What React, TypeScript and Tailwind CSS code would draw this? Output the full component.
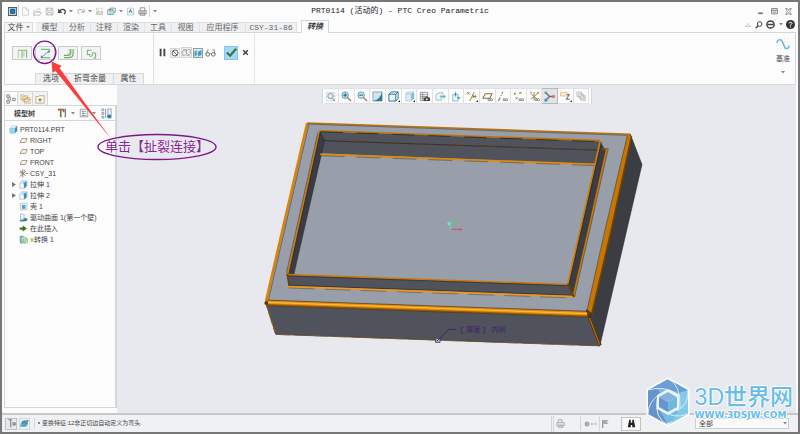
import type { ReactNode } from "react";

const MONO = "font-['Liberation_Mono','Noto_Sans_CJK_SC',monospace]";
const SANS = "font-['Liberation_Sans','Noto_Sans_CJK_SC',sans-serif]";

type IconProps = { size?: number; children: ReactNode };

// All small icons are drawn on a 12 x 12 grid
function Icon({ size = 12, children }: IconProps) {
  return (
    <svg width={size} height={size} viewBox="0 0 12 12" fill="none" className="block shrink-0" aria-hidden="true">
      {children}
    </svg>
  );
}

function Caret() {
  return (
    <svg width="4" height="3" viewBox="0 0 4 3" className="block shrink-0" aria-hidden="true">
      <path d="M0 0H4L2 2.5Z" fill="#888" />
    </svg>
  );
}

const glasses = <path d="M6.5 9.5a1.2 1.2 0 1 0 2.4 0a1.2 1.2 0 1 0-2.4 0M9.2 9.5a1.2 1.2 0 1 0 2.4 0a1.2 1.2 0 1 0-2.4 0" stroke="#555" strokeWidth=".7" />;

const quickAccess = [
  { label: "New", w: "w-[12px]", icon: <path d="M2 1H7L10 4V11H2ZM7 1V4H10" stroke="#c8c8c8" /> },
  { label: "Open", w: "w-[12px]", icon: <path d="M1 11V5H4L5 6H9V7M1 11L3 7H11L9 11ZM5 4Q7 1 10 3" stroke="#b9b9b9" /> },
  { label: "Save", w: "w-[13px]", icon: <path d="M1.500 1.500H10.500V10.500H1.500ZM3.500 1.500V5H8.500V1.500M3.500 10.500V7.500H8.500V10.500" stroke="#aaa" /> },
  { label: "Undo", w: "w-[12px]", icon: <path d="M1 3V7H5M1.500 6.500Q4 2 8 3.500Q11.500 6 8 9.500" stroke="#3d4043" strokeWidth="1.700" /> },
  { label: "Undo list", w: "w-[6px]", caret: true },
  { label: "Redo", w: "w-[13px]", icon: <path d="M11 3V7H7M10.500 6.500Q8 2 4 3.500Q.5 6 4 9.500" stroke="#aaa" strokeWidth="1.300" /> },
  { label: "Redo list", w: "w-[6px]", caret: true },
  { label: "Regenerate", w: "w-[12px]", icon: <path d="M2 1V4H5M4 2H6M8 1L10 3M8 3L10 1M2 6H9V10H2ZM4 6V10M2 8H9M10 5V11" stroke="#b4b4b4" strokeWidth=".9" /> },
  { label: "Windows", w: "w-[12px]", icon: <><path d="M1 3.500H8V10H1ZM4 1.500H11V7H4Z" stroke="#777" /><path d="M4 5H9V10H4Z" fill="#bde5f5" stroke="#5a9ab6" strokeWidth=".7" /></> },
  { label: "Windows list", w: "w-[7px]", caret: true },
  { label: "Close window", w: "w-[12px]", icon: <><path d="M2 1.500H10V10.500H2Z" fill="#f3f8fb" stroke="#96a6ad" strokeWidth=".7" /><path d="M4 8L6 3L8 8M5 6H7" stroke="#486e8b" /></> },
  { label: "Print", w: "w-[13px]", icon: <><path d="M3 5V1H9V5M1 5H11V9H1ZM3 8H9V11H3Z" stroke="#777" /><path d="M2 6H10V7H2Z" fill="#888" /></> },
];

const tabs = [
  { name: "模型", w: "w-[28px]" },
  { name: "分析", w: "w-[27px]" },
  { name: "注释", w: "w-[27px]" },
  { name: "渲染", w: "w-[27px]" },
  { name: "工具", w: "w-[27px]" },
  { name: "视图", w: "w-[28px]" },
  { name: "应用程序", w: "w-[46px]" },
  { name: "CSY-31-86", w: "w-[51px]" },
];

const convertTools = [
  { label: "边扯裂", icon: <><path d="M1 2.500H5.500V11M11 2.500H6.500M10.500 2.500V11" stroke="#79b56b" strokeWidth="1.100" /><path d="M1.500 2V11M7.500 4V9" stroke="#a4cf98" /></> },
  { label: "扯裂连接", icon: <><path d="M1 1.500H10.500V4M1.500 8V10.500H11" stroke="#84bc75" strokeWidth="1.100" /><path d="M3 9L9 4" stroke="#5f87a6" /><path d="M1 9H3V11H1ZM8.500 3H10.500V5H8.500Z" fill="#3f78a8" /></> },
  { label: "边折弯", icon: <><path d="M11 1V6Q11 10.500 6 10.500H1M8.500 1V5.500Q8.500 8 5 8H1" stroke="#78a86a" strokeWidth="1.300" /><path d="M7 1V5Q7 6.500 5 6.500" stroke="#bbb" /></> },
  { label: "拐角止裂槽", icon: <path d="M1 2.500H6M1.500 2V7H4V8.500Q6 10 7 7.500V5.500H10.500V11H8" stroke="#79b56b" strokeWidth="1.100" /> },
];

const viewTools = [
  { label: "Refit", icon: <><path d="M1.500 1.500H10.500V10.500H1.500Z" stroke="#b9c8cf" strokeDasharray="2 1" /><circle cx="6" cy="5.500" r="3" fill="#d5eef8" stroke="#7897a6" /><path d="M8 8L11 11" stroke="#a89473" strokeWidth="1.300" /></> },
  { label: "Zoom in", icon: <><circle cx="4.500" cy="4.500" r="3.500" fill="#cdebf7" stroke="#5c8ba1" /><path d="M2.500 4.500H6.500M4.500 2.500V6.500" stroke="#166c9e" strokeWidth="1.200" /><path d="M7 7L11 11" stroke="#93826b" strokeWidth="1.500" /></> },
  { label: "Zoom out", icon: <><circle cx="4.500" cy="4.500" r="3.500" fill="#cdebf7" stroke="#5c8ba1" /><path d="M2.500 4.500H6.500" stroke="#166c9e" strokeWidth="1.200" /><path d="M7 7L11 11" stroke="#93826b" strokeWidth="1.500" /></> },
  { label: "Repaint", icon: <><path d="M1 1H11V11H1Z" fill="#cfe6ee" stroke="#70828b" strokeWidth=".7" /><path d="M11 1V11H1Q9 9 11 1Z" fill="#2f7f9f" /></> },
  { label: "Display style", more: true, icon: <path d="M1 3.500H8.500V11H1ZM1 3.500L3.500 1H11L8.500 3.500M11 1V8.500L8.500 11" fill="#e7f7fc" stroke="#24698a" /> },
  { label: "Saved orientations", more: true, icon: <><path d="M2 3H8V11H2Z" fill="#dcecf2" stroke="#b1c1c8" strokeWidth=".7" /><path d="M2 3L4 1H11L8 3Z" fill="#edf6f9" stroke="#a6b7be" strokeWidth=".7" /><path d="M11 1V8L8 11V3Z" fill="#75c2df" /></> },
  { label: "View manager", icon: <><path d="M1.500 1.500H9.500V10.500H1.500ZM1.500 4H9.500M1.500 6H9.500M1.500 8H9.500M4 1.500V10.500" stroke="#888" strokeWidth=".9" /><path d="M5 7H7L8 6H9L10 7H12V11H5Z" fill="#444" /><circle cx="8.500" cy="9" r="1.100" fill="#ddd" /></> },
  { label: "Section", icon: <><path d="M1 4L4 2H9L7 4V10H1Z" fill="#edf5f7" stroke="#99aeb7" strokeWidth=".8" /><path d="M5 5H9V3L12 6L9 9V7H5Z" fill="#58b4d6" stroke="#fff" strokeWidth=".4" /></> },
  { label: "Perspective", icon: <><path d="M3 4H9V11H3Z" fill="#e4f4f9" stroke="#8daab5" strokeWidth=".8" /><path d="M4.500 4L6 .5L7.500 4H6.500V6H5.500V4ZM8 6L12 7.500L8 9Z" fill="#379bc4" /></> },
  { label: "Datum display", more: true, icon: <path d="M1 1L4 4M1 4L4 1M4 11L9 1M7 4L11 8M7 8L11 4M7 6H11.500" stroke="#8b713e" strokeWidth=".9" /> },
  { label: "Plane display", icon: <><path d="M3.500 3H11L8.500 8H1Z" stroke="#8b713e" strokeWidth="1.100" />{glasses}</> },
  { label: "Axis display", icon: <><path d="M1.500 11L3.500 7M4.200 5.500L4.700 4.500M5.300 3L6.300 1" stroke="#8b713e" strokeWidth="1.200" />{glasses}</> },
  { label: "Point display", icon: <><path d="M1 2L3 4M1 4L3 2M7 1L9 3M7 3L9 1M3 7L5 9M3 9L5 7" stroke="#8b713e" />{glasses}</> },
  { label: "Csys display", icon: <><path d="M5.500 1V10M2 3L9 9M2 9L9 3M1 1L3 2M9 1L11 3M9 3L11 1" stroke="#9a7d43" />{glasses}</> },
  { label: "Spin center", pressed: true, icon: <><path d="M2 2L6 6L2 10M6 6H11" stroke="#627079" strokeWidth="1.500" /><circle cx="2" cy="2" r="1.500" fill="#65a269" /><circle cx="2" cy="10" r="1.700" fill="#3f9dc4" /><circle cx="10.300" cy="6" r="1.700" fill="#e06b67" /></> },
  { label: "Annotation display", more: true, icon: <><path d="M.5 1.500H7.500V5.500H.5Z" fill="#fbefc9" stroke="#cdbb87" strokeWidth=".8" /><path d="M7.500 4H10L7 9H11" stroke="#777" strokeWidth="1.200" /></> },
  { label: "Layers", icon: <path d="M1 1H6V6H1ZM3 3H8V8H3ZM5 5H10V10H5ZM7 9L11 11M8 7H11" fill="#f1f1f1" stroke="#bbb" strokeWidth=".9" /> },
];

const planeIcon = <path d="M4 3.500H11L8.500 8.500H1.500Z" stroke="#8f825f" strokeWidth="1.100" />;
const extrudeIcon = <><path d="M1 4L4 1H11V8L8 11H1Z" fill="#c9dfe8" stroke="#90aab6" strokeWidth=".6" /><path d="M6 4L10 2V8L7 11Z" fill="#348fbd" /><path d="M2 5H6V10H2Z" fill="#fff" /></>;

const treeItems = [
  { name: "RIGHT", icon: planeIcon },
  { name: "TOP", icon: planeIcon },
  { name: "FRONT", icon: planeIcon },
  { name: "CSY_31", icon: <path d="M5 1V11M1 2L9 9M1 10L9 3M9 6H12M1 5H4M7 1V3" stroke="#746241" strokeWidth="1.100" /> },
  { name: "拉伸 1", icon: extrudeIcon, expandable: true },
  { name: "拉伸 2", icon: extrudeIcon, expandable: true },
  { name: "壳 1", icon: <><path d="M1.500 1.500H10.500V10.500H1.500Z" fill="#e3eef3" stroke="#a5b6be" strokeWidth=".8" /><path d="M4 4H8.500V9H4Z" fill="#579fc0" /></> },
  { name: "驱动曲面 1(第一个壁)", icon: <><path d="M2 1L7 2V7L2 9Z" fill="#eef1f3" stroke="#9ca8ae" strokeWidth=".8" /><path d="M1 9Q5 11 7 7L11 7V10Q7 12 1 11Z" fill="#317d9d" /></> },
  { name: "在此插入", icon: <path d="M1 4.500H5V2L10.500 6L5 10V7.500H1Z" fill="#37701d" /> },
  { name: "转换 1", icon: <><path d="M1 1H6V11H1Z" fill="#7babb9" /><path d="M3 3H9V11H7V6H5V11H3Z" fill="#d4e8d2" stroke="#6aab69" strokeWidth=".8" /><path d="M9 5H11V11" stroke="#579d61" /></>, mark: true },
];

function TitleBar() {
  return (
    <header className="relative flex h-[18px] shrink-0 items-center justify-between pl-[4px] pr-[3px]">
      <div className="flex items-center">
        <button aria-label="Creo" className="flex w-[12px] justify-center">
          <Icon size={9}>
            <path d="M.5 .5H11.500V11.500H.5Z" fill="#bad7e7" stroke="#55585c" strokeWidth="1.400" />
            <path d="M3.500 3H9V8.500H3.500Z" fill="#1679bd" stroke="#174665" />
          </Icon>
        </button>
        <div className="flex h-[12px] items-center border-x border-[#d5d5d5]">
          {quickAccess.map((q) => (
            <button key={q.label} aria-label={q.label} className={`flex justify-center ${q.w}`}>
              {q.caret ? <Caret /> : <Icon size={9}>{q.icon}</Icon>}
            </button>
          ))}
        </div>
        <button aria-label="Customize toolbar" className="ml-[3px]">
          <Caret />
        </button>
      </div>
      <h1 className="absolute left-1/2 -translate-x-1/2 whitespace-nowrap text-[8px] leading-[10px] text-[#222]">
        PRT0114 (活动的) - PTC Creo Parametric
      </h1>
      <div className="flex">
        <button aria-label="Minimize" className="flex w-[14px] justify-center">
          <Icon size={7}><path d="M2 9H10" stroke="#777" strokeWidth="3" /></Icon>
        </button>
        <button aria-label="Restore" className="flex w-[14px] justify-center">
          <Icon size={7}><path d="M1 1H11V10H1ZM1 4H11M3 7H9" stroke="#777" strokeWidth="1.500" /></Icon>
        </button>
        <button aria-label="Close" className="flex w-[14px] justify-center">
          <Icon size={7}><path d="M1 1H4L6 4L8 1H11L8 6L11 11H8L6 8L4 11H1L4 6Z" stroke="#777" strokeWidth="1.300" /></Icon>
        </button>
      </div>
    </header>
  );
}

function TabBar() {
  return (
    <nav className="flex h-[13px] shrink-0 items-end border-b border-[#d4d7d9] text-[8px] leading-[10px] text-[#666]">
      <button className="flex h-[10px] w-[29px] items-center justify-center gap-[2px] border border-b-0 border-[#d9dcdf] bg-[#f5f5f6] text-[#444]">
        文件 <Caret />
      </button>
      <div className="ml-[3px] flex h-[10px] border-t border-[#dfe1e4] bg-[#eff0f2]">
        {tabs.map((t) => (
          <button key={t.name} className={`whitespace-nowrap border-r border-[#dfe1e4] text-center leading-[9px] ${t.w}`}>
            {t.name}
          </button>
        ))}
      </div>
      <button className="-mb-px ml-[4px] h-[13px] w-[28px] border border-b-0 border-[#d4d7d9] bg-[#fcfcfc] font-bold italic text-[#444]">
        转换
      </button>
      <div className="ml-auto flex items-center self-start pr-[1px]">
        <button aria-label="Minimize ribbon" className="flex w-[11px] justify-center">
          <Icon size={6}><path d="M1 9L6 3L11 9Z" stroke="#bbb" strokeWidth="1.500" /></Icon>
        </button>
        <button aria-label="Search" className="flex w-[11px] justify-center">
          <Icon size={8}><circle cx="7" cy="4.500" r="3.500" stroke="#444" strokeWidth="1.500" /><path d="M4.500 7.500L1 11" stroke="#444" strokeWidth="2" /></Icon>
        </button>
        <button aria-label="Learning connector" className="flex w-[12px] justify-center">
          <Icon size={9}><circle cx="6" cy="6" r="4.800" stroke="#3d4145" strokeWidth="2" /><path d="M2 6H10" stroke="#3d4145" strokeWidth="2" /></Icon>
        </button>
        <button aria-label="More" className="flex w-[9px] justify-center"><Caret /></button>
        <button aria-label="Help" className="flex w-[10px] justify-center">
          <Icon size={9}><circle cx="6" cy="6" r="6" fill="#333" /><path d="M4 4.500Q4 3 6 3T8 4.500Q8 5.500 6 6.500V7.500M6 8.500V10" stroke="#fff" strokeWidth="1.300" /></Icon>
        </button>
      </div>
    </nav>
  );
}

function Ribbon() {
  return (
    <section className="flex h-[52px] shrink-0 border-x border-b border-[#d4d7d9] text-[8px] text-[#444]">
      <div className="flex w-[149px] flex-col justify-between border-r border-[#dee0e2]">
        <div className="flex gap-[3px] pl-[7px] pt-[13px]">
          {convertTools.map((t) => (
            <button key={t.label} aria-label={t.label} className="flex h-[14px] w-[20px] items-center justify-center border border-[#c8cacd] bg-[#f3f4f5]">
              <Icon size={11}>{t.icon}</Icon>
            </button>
          ))}
        </div>
        <div className="ml-[30px] flex h-[11px] w-[109px] border-x border-t border-[#d7dadd] bg-[#eff0f2] leading-[10px]">
          <button className="w-[31px] border-r border-[#d7dadd]">选项</button>
          <button className="w-[47px] border-r border-[#d7dadd]">折弯余量</button>
          <button className="flex-1">属性</button>
        </div>
      </div>
      <div className="flex h-[39px] items-center pl-[3px]">
        <button aria-label="Pause" className="flex w-[11px] justify-center">
          <Icon size={9}><path d="M3.500 1V11M8.500 1V11" stroke="#444" strokeWidth="2.500" /></Icon>
        </button>
        <button aria-label="No preview" className="ml-[2px] border border-[#d4d4d4] bg-[#f4f4f4]">
          <Icon size={8}><circle cx="6" cy="6" r="4.500" stroke="#666" strokeWidth="1.500" /><path d="M3 3L9 9" stroke="#666" strokeWidth="1.500" /></Icon>
        </button>
        <button aria-label="Detached preview" className="ml-[1px] border border-[#d4d4d4] bg-[#f1f1f1]">
          <Icon size={9}><path d="M1 4L4 2H6V8L3 10H1ZM6 4L8 2H11V8L9 10H6M2 1L10 11" stroke="#999" /></Icon>
        </button>
        <button aria-label="Attached preview" className="ml-[1px] border border-[#999] bg-[#e4edf2]">
          <Icon size={8}><path d="M1 4L4 2V9L1 11ZM6 4L11 2V9L6 11Z" fill="#2f9dce" stroke="#6cb5d3" /></Icon>
        </button>
        <button aria-label="Verify" className="ml-[2px]">
          <Icon size={11}><path d="M1 8L3 3H4M11 8L10 3H8M5 8Q6 6 7 8" stroke="#888" /><circle cx="3" cy="8" r="2" stroke="#666" /><circle cx="9" cy="8" r="2" stroke="#666" /></Icon>
        </button>
        <button aria-label="确定" className="ml-[8px] flex h-[14px] w-[14px] items-center justify-center border border-[#83c6ee] bg-[#a3d8fa]">
          <Icon size={11}><path d="M1 6L4.500 9.500L11 2" stroke="#397732" strokeWidth="2.400" /></Icon>
        </button>
        <button aria-label="取消" className="ml-[4px]">
          <Icon size={7}><path d="M2 2L10 10M10 2L2 10" stroke="#444" strokeWidth="2.600" /></Icon>
        </button>
        <span className="ml-[5px] h-[51px] self-start border-r border-[#e2e3e5]" />
      </div>
      <button className={`ml-auto mr-[5px] flex flex-col items-center pt-[4px] text-[7px] leading-[9px] ${SANS}`}>
        <Icon size={14}>
          <path d="M1 1H12M1 4H12M1 7H12M1 10H12" stroke="#bbb" strokeWidth=".6" strokeDasharray=".7 2.300" />
          <path d="M.5 5Q3 0 5.500 4C7 7 7 10 9 10Q10.500 10 11.500 7.500" stroke="#58b7dc" strokeWidth="1.200" />
        </Icon>
        <span className="mb-[8px] mt-[3px]">基准</span>
        <Caret />
      </button>
    </section>
  );
}

function ModelTree() {
  return (
    <aside className={`flex w-[113px] shrink-0 flex-col bg-[#fcfcfc] pb-[5px] pt-[6px] text-[7px] text-[#444] ${SANS}`}>
      <div className="flex h-[14px]">
        <button aria-label="Model tree" className="flex w-[14px] items-center justify-center border border-b-0 border-[#d4d7d9]">
          <Icon size={10}><path d="M1 1H4V4H1ZM1 8H4V11H1ZM8 5H11V8H8ZM2.500 4V8M5 3V9" stroke="#777" /></Icon>
        </button>
        <button aria-label="Folders" className="flex w-[15px] items-center justify-center border-r border-t border-[#d4d7d9] bg-[#f1f2f3]">
          <Icon size={11}><path d="M1 2H4L5 3H8V7H1ZM3 4H6L7 5H10V9H3ZM5 6H8L9 7H12V11H5Z" fill="#faf1d6" stroke="#c3a66c" strokeWidth=".8" /></Icon>
        </button>
        <button aria-label="Favorites" className="flex w-[15px] items-center justify-center border-r border-t border-[#d4d7d9] bg-[#f1f2f3]">
          <Icon size={10}><path d="M1 3H4L5 2H11V11H1Z" fill="#fbf3db" stroke="#b9a16c" strokeWidth=".9" /><path d="M6 4.500L7 6.500L9 7L7 7.500L6 9.500L5 7.500L3 7L5 6.500Z" fill="#407ca3" /></Icon>
        </button>
      </div>
      <div className="flex min-h-0 flex-1 flex-col border border-r-2 border-[#d4d7d9]">
        <div className="flex h-[15px] shrink-0 items-center border-b border-[#d4d7d9] pl-[9px]">
          <h2 className="w-[43px] font-bold leading-[9px]">模型树</h2>
          <button aria-label="Settings" className="mr-[4px]">
            <Icon size={10}><path d="M1 2H8V5M4.500 2V11" stroke="#8a6d49" strokeWidth="2" /><path d="M10 1V11" stroke="#777" strokeWidth="1.500" /></Icon>
          </button>
          <Caret />
          <button aria-label="Show" className="ml-[4px] mr-[3px]">
            <Icon size={10}><path d="M1.500 1.500H10.500V10.500H1.500ZM3 4H9M3 6.500H9M3 9H9M5 3V10" stroke="#8d979b" /></Icon>
          </button>
          <Caret />
          <button aria-label="Tree filters" className="ml-[5px]">
            <Icon size={11}><path d="M1 1H3V3H1ZM1 5H3V7H1ZM1 9H3V11H1ZM5 1V11M7.500 1H11V11H7.500Z" stroke="#829ba6" /><circle cx="9" cy="9" r="2" fill="#1e7da8" /></Icon>
          </button>
        </div>
        <ul className="pt-[3px] leading-[11px]">
          <li className="flex items-center gap-[2px] pl-[4px]">
            <Icon size={9}><path d="M1 4L4 1H11V8L8 11H1Z" fill="#3a8daf" /><path d="M1 4H8V11H1Z" fill="#92d4ee" /><path d="M1 4L4 1H11L8 4Z" fill="#d6f0fa" /></Icon>
            PRT0114.PRT
          </li>
          {treeItems.map((item) => (
            <li key={item.name} className="flex h-[11px] items-center whitespace-nowrap pl-[7px]">
              <span className="w-[7px]">
                {item.expandable && (
                  <svg width="4" height="5" viewBox="0 0 4 5" className="block" aria-hidden="true">
                    <path d="M0 0L4 2.500L0 5Z" fill="#777" />
                  </svg>
                )}
              </span>
              <Icon size={9}>{item.icon}</Icon>
              <span className="w-[2px]" />
              {item.mark && (
                <Icon size={4}><path d="M1 1L11 11M11 1L1 11M6 0V12" stroke="#afb51f" strokeWidth="2.500" /></Icon>
              )}
              {item.name}
            </li>
          ))}
        </ul>
      </div>
    </aside>
  );
}

function PartModel() {
  return (
    <svg viewBox="117 85 680 328" className="absolute inset-0 h-full w-full" role="img" aria-label="PRT0114">
      {/* outer faces */}
      <path d="M307.500 123L631 134L589 313L266 302Z" fill="#989eaa" />
      <path d="M266 303L589 315L600.500 346L276 334.500Z" fill="#50535b" stroke="#34363b" strokeWidth=".7" />
      <path d="M631 134L642.700 164.500L600.500 346L589 315Z" fill="#3b3d42" stroke="#242528" strokeWidth=".6" />
      <path d="M276 334.500L600.500 346" stroke="#7d5726" strokeWidth=".8" strokeDasharray="14 5" />
      {/* bent edges */}
      <path d="M307.500 123L266.300 301" stroke="#da8306" strokeWidth="2.600" />
      <path d="M309.300 124L268.500 301" stroke="#4f4738" strokeWidth=".6" />
      <path d="M307.500 122.700L631 134" stroke="#bd7207" strokeWidth="1.500" />
      <path d="M308 123.900L629 135.200" stroke="#4b4740" strokeWidth=".6" />
      <path d="M628 135L632.500 135.500L612 230L592.800 314L587.500 311.500L606 230Z" fill="#c77505" />
      <path d="M632.300 136L612 230L592.500 314" fill="none" stroke="#714204" strokeWidth="1.600" />
      <path d="M628 136L605.700 230L587.500 311.500" fill="none" stroke="#433c2e" strokeWidth=".6" />
      <path d="M267.500 302.900L588.500 314.300" stroke="#9b5a00" strokeWidth="5.500" />
      <path d="M267.500 302.300L588.500 313.700" stroke="#e18c0b" strokeWidth="3.800" />
      <path d="M268 302.500L588 313.700" stroke="#ffb93e" strokeWidth="1.100" />
      <path d="M268 300.200L588 311.300M267 306L589 317.200" stroke="#49391e" strokeWidth=".6" />
      <path d="M589 315L601 345.500" stroke="#583507" strokeWidth="3" />
      <path d="M589 315L600.500 345" stroke="#b66c0b" strokeWidth="1.200" />
      <path d="M266.500 304L276 334" stroke="#8c5817" strokeWidth="1.500" strokeDasharray="6 2" />
      <circle cx="266.500" cy="303" r="1.900" fill="#513817" />
      <path d="M587 310L592 313L590 318Z" fill="#68400a" stroke="#26221c" strokeWidth=".6" />
      {/* pocket */}
      <path d="M320 131L601 141L596 164L321.500 153Z" fill="#50535b" />
      <path d="M324 140.500L599 150" stroke="#2b251d" strokeWidth=".8" />
      <path d="M350 141.400L590 149.600" stroke="#654110" strokeWidth=".6" strokeDasharray="20 12" />
      <path d="M320 131L325 140L294 275L288 275Z" fill="#3a3c41" stroke="#282a2d" strokeWidth=".5" />
      <path d="M320.500 154.300L596 164.300" stroke="#e08b0a" strokeWidth="1.800" />
      <path d="M321 155.600L596 165.500" stroke="#51493b" strokeWidth=".6" strokeDasharray="24 12" />
      <path d="M320 130.500L601 140.500" stroke="#be7107" strokeWidth="1.600" />
      <path d="M321 131.600L601 141.600" stroke="#282724" strokeWidth=".8" strokeDasharray="22 14" />
      <path d="M319.500 131L287.700 275" stroke="#cf7b06" strokeWidth="1.600" />
      <path d="M318 133L286.700 273M321 132L289.500 274" stroke="#302b23" strokeWidth=".5" />
      <path d="M601 141L605 148L608 148.500L574 297L568.500 284.500Z" fill="#3b3d42" />
      <path d="M601 141L568.500 284.500" stroke="#d17d07" strokeWidth="1.800" />
      <path d="M602.200 142L569.800 284" stroke="#2b2820" strokeWidth=".6" />
      <path d="M607.800 148L589.500 230L574 297" fill="none" stroke="#cb7706" strokeWidth="2" />
      <path d="M609 148.500L575.200 297" stroke="#49412f" strokeWidth=".6" />
      <path d="M603 149L609 148" stroke="#9b6212" />
      <path d="M288 275L568.500 284.500L574 296L289 286Z" fill="#50535b" />
      <path d="M287.500 274.600L568.500 284.500" stroke="#ca7807" strokeWidth="1.500" />
      <path d="M289 276L568 285.800M289 285.200L573 295.200" stroke="#302b24" strokeWidth=".6" />
      <path d="M288 286.600L574 296.800" stroke="#ec9a1c" strokeWidth="1.800" />
      <path d="M289 288L574 298" stroke="#56432a" strokeWidth=".5" strokeDasharray="26 10" />
      <path d="M287.500 274L289.500 286M568.500 284L574.500 297" stroke="#68400b" strokeWidth="1.800" />
      {/* spin center */}
      <path d="M452 229L453.500 222" stroke="#58d45c" />
      <path d="M451.500 229L449 223.500" stroke="#47dce1" />
      <path d="M452 229.300H462" stroke="#c4565d" />
      <circle cx="449.500" cy="223.500" r="1.600" fill="#5de8ec" />
      <path d="M452.500 221H455L453.500 224Z" fill="#4fdc55" />
      <path d="M460 228L463 229.500L460 231Z" fill="#e34a4f" />
      {/* thickness note */}
      <path d="M438 340.500L449.500 329.500H456.500" fill="none" stroke="#422169" strokeWidth=".9" />
      <path d="M436 338.500H440.500V342.500H436Z" fill="#c7c2cc" stroke="#443a4e" strokeWidth=".8" />
      <path d="M437 341.500L442 337" stroke="#422169" />
      <text x="460" y="332" fontSize="8" fill="#421d70" className={MONO}>[</text>
      <text x="467" y="332" fontSize="7" fill="#421d70" className={MONO}>厚度</text>
      <text x="482" y="332" fontSize="8" fill="#421d70" className={MONO}>]</text>
      <text x="492" y="332" fontSize="7" fill="#421d70" className={MONO}>内侧</text>
    </svg>
  );
}

function Viewport() {
  return (
    <main className="relative flex-1 bg-[#e7e9ee] pt-[3px]">
      <PartModel />
      <div className="relative mx-auto flex h-[16px] w-[270px] border-x border-[#d5d8dc] bg-[#fcfcfc] px-[1px]">
        {viewTools.map((t) => (
          <button
            key={t.label}
            aria-label={t.label}
            className={`relative flex flex-1 items-center justify-center border-r border-y ${
              t.pressed ? "border-[#b5b8bb] bg-[#e3e4e6]" : "border-[#dfe1e4]"
            }`}
          >
            <Icon size={11}>{t.icon}</Icon>
            {t.more && (
              <svg width="2" height="2" viewBox="0 0 2 2" className="absolute bottom-px right-px" aria-hidden="true">
                <path d="M2 0V2H0Z" fill="#222" />
              </svg>
            )}
          </button>
        ))}
      </div>
    </main>
  );
}

function StatusBar() {
  return (
    <footer className={`flex h-[19px] shrink-0 items-center border-t-2 border-[#c6c8cb] bg-[#f0f1f2] pl-[3px] pr-[9px] text-[#444] ${SANS}`}>
      <button aria-label="Toggle navigator" className="mr-[2px] flex h-[12px] w-[12px] items-center justify-center border border-[#bfc2c4] bg-[#e7e8e9]">
        <Icon size={9}><path d="M2 1H6M5 1V11M8 5H11V8H8Z" stroke="#666" strokeWidth="1.200" /></Icon>
      </button>
      <button aria-label="Toggle browser" className="flex h-[12px] w-[11px] items-center justify-center border border-[#d5d7d8]">
        <Icon size={9}><circle cx="6" cy="6" r="4.500" fill="#60b4d8" /><path d="M1 10Q0 7 5 4T11 2Q11 5 6 8T1 10M3 5H9" stroke="#28799e" /></Icon>
      </button>
      <span className="ml-[4px] h-[11px] border-l border-[#d3d5d7]" />
      <p className="ml-[3px] flex items-center gap-[2px] whitespace-nowrap pb-[2px] text-[6px] leading-[8px]">
        <span className="h-[2px] w-[2px] rounded-full bg-[#2d6d96]" />
        变换特征:12非正切边自动定义为弯头.
      </p>
      <div className="ml-auto flex items-center">
        <span className="h-[16px] w-[3px] border-x border-[#d3d5d7]" />
        <button aria-label="Regeneration status" className="ml-[2px] mr-[15px]">
          <Icon size={9}><path d="M3 5V1H8V5M1 5H11V9H1ZM3 8H9V11H3Z" stroke="#aaa" strokeWidth="1.300" /></Icon>
        </button>
        <span className="h-[15px] border-l border-[#d3d5d7]" />
        <svg width="13" height="6" viewBox="0 0 13 6" className="ml-[3px] mr-[2px]" aria-hidden="true">
          <circle cx="3" cy="3" r="2.500" fill="#aaa" />
          <circle cx="8" cy="3" r="1.300" fill="#c8c8c8" />
          <circle cx="11.500" cy="3" r="1.300" fill="#c8c8c8" />
        </svg>
        <span className="h-[15px] border-l border-[#d3d5d7]" />
        <button aria-label="Notifications" className="ml-[2px] mr-[11px]">
          <Icon size={8}><path d="M1 0V12" stroke="#999" strokeWidth="2" /><path d="M1 0H10L7 3L10 6H1Z" fill="#aaa" /></Icon>
        </button>
        <button aria-label="Find" className="flex h-[14px] w-[20px] items-center justify-center border border-[#c1c4c7] bg-[#fafafa]">
          <Icon size={9}><path d="M3 1H5V5H7V1H9L11 11H7V8H5V11H1Z" fill="#222" /></Icon>
        </button>
        <label className="relative ml-[54px] flex items-center">
          <select aria-label="选择过滤器" className="h-[11px] w-[94px] appearance-none border border-[#cdd0d3] bg-[#fafafa] pl-[3px] text-[7px] leading-[9px]">
            <option>全部</option>
          </select>
          <span className="pointer-events-none absolute right-[2px]"><Caret /></span>
        </label>
      </div>
    </footer>
  );
}

// Red arrow and ringed note that point at the rip-connect button
function Callout() {
  return (
    <div className="pointer-events-none absolute left-0 top-0">
      <svg width="220" height="165" viewBox="2 2 220 165" fill="none" className="block" aria-hidden="true">
        <circle cx="44.700" cy="52.300" r="11.200" stroke="#82168b" strokeWidth="1.300" />
        <path d="M51.500 61.500L61.800 66L59.500 68L111.500 139.500L55.500 71L52.500 73Z" fill="#fa3d3d" />
        <ellipse cx="157" cy="147" rx="59" ry="12.500" stroke="#82168b" strokeWidth="1.400" />
      </svg>
      <p className={`absolute left-[103px] top-[136px] whitespace-nowrap text-[13px] leading-[18px] text-[#8b2594] ${SANS}`}>
        单击【扯裂连接】
      </p>
    </div>
  );
}

function Watermark() {
  return (
    <div className="pointer-events-none absolute bottom-[5px] right-[5px] flex items-center gap-[5px] text-[#68bde6]">
      <svg width="44" height="50" viewBox="0 0 44 50" className="block shrink-0" aria-hidden="true">
        <path d="M22 2L42 13V37L22 48L2 37V13Z" fill="#74bce2" stroke="#fff" strokeWidth="3" />
        <path d="M22 2L42 13V26Q34 8 2 13Z" fill="#6b9fd3" />
        <path d="M2 13Q20 8 12 30L22 48L2 37Z" fill="#6894cc" />
        <path d="M42 13V37L22 48Q37 35 33 16Z" fill="#82cae8" />
        <path d="M2 13Q18 8 33 18M22 2Q35 7 34 31M42 13Q43 27 31 34M42 37Q27 43 14 32M22 48Q8 41 11 22M2 37Q2 25 14 17" fill="none" stroke="#e2f2f9" strokeWidth=".9" />
        <path d="M22 12L33 18V32L22 38L11 32V18Z" fill="#eef5f9" />
        <path d="M22 15L31 20L22 25L13 20Z" fill="#85b3df" />
        <path d="M13 20L22 25V35L13 30Z" fill="#6596cc" />
        <path d="M31 20L22 25V35L31 30Z" fill="#6bb9dd" />
      </svg>
      <div className="flex flex-col [text-shadow:1px_0_#fff,-1px_0_#fff,0_1px_#fff,0_-1px_#fff]">
        <span className={`whitespace-nowrap text-[23px] font-medium leading-[26px] ${SANS}`}>3D世界网</span>
        <span className="whitespace-nowrap font-['DejaVu_Sans',sans-serif] text-[9px] font-bold leading-[10px]">WWW.3DSJW.COM</span>
      </div>
    </div>
  );
}

export default function App() {
  return (
    <div className={`relative flex h-screen flex-col overflow-hidden border-2 border-[#777] bg-[#fcfcfc] ${MONO}`}>
      <TitleBar />
      <div className="flex min-h-0 flex-1 flex-col px-[2px]">
        <TabBar />
        <Ribbon />
        <div className="flex min-h-0 flex-1">
          <ModelTree />
          <Viewport />
        </div>
      </div>
      <StatusBar />
      <Callout />
      <Watermark />
    </div>
  );
}
